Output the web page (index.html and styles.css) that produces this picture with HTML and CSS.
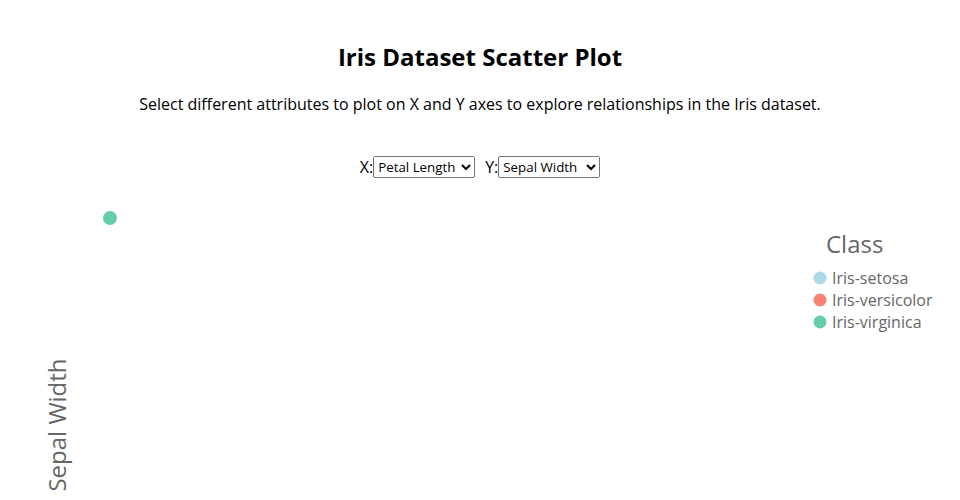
FILE: index.html
```html
<!DOCTYPE html>
<html>
<head>
<meta charset="utf-8">
<link rel="stylesheet" href="styles.css">
</head>
<body>
<h1 class="title">Iris Dataset Scatter Plot</h1>
<p class="subtitle">Select different attributes to plot on X and Y axes to explore relationships in the Iris dataset.</p>
<div class="controls">
  <label class="ctl">X:<select class="sel"><option>Sepal Length</option><option>Sepal Width</option><option selected>Petal Length</option><option>Petal Width</option></select></label>
  <label class="ctl">Y:<select class="sel"><option>Sepal Length</option><option selected>Sepal Width</option><option>Petal Length</option><option>Petal Width</option></select></label>
</div>
<svg class="chart" width="960" height="310" viewBox="0 190 960 310">
  <circle cx="110" cy="218" r="7" fill="#66cdaa"/>
  <text class="axis-label" transform="translate(66,425) rotate(-90)" text-anchor="middle">Sepal Width</text>
  <text class="legend-title" x="826" y="253">Class</text>
  <circle cx="820" cy="278" r="6.5" fill="#add8e6"/>
  <text class="legend-item" x="832" y="284">Iris-setosa</text>
  <circle cx="820" cy="300" r="6.5" fill="#fa8072"/>
  <text class="legend-item" x="832" y="306">Iris-versicolor</text>
  <circle cx="820" cy="322" r="6.5" fill="#66cdaa"/>
  <text class="legend-item" x="832" y="328">Iris-virginica</text>
</svg>
</body>
</html>
```
FILE: styles.css
```css
html, body {
  margin: 0;
  padding: 0;
  background: #fff;
}
body {
  font-family: "Open Sans", "DejaVu Sans", sans-serif;
  color: #000;
  text-align: center;
}
.title {
  margin: 42px 0 0;
  font-size: 24px;
  line-height: 30px;
  font-weight: 700;
}
.subtitle {
  margin: 20px 0 0;
  font-size: 16px;
  line-height: 24px;
}
.controls {
  margin-top: 40px;
  height: 22px;
  display: flex;
  justify-content: center;
  align-items: center;
  gap: 10px;
  font-size: 16px;
}
.ctl {
  display: flex;
  align-items: center;
}
.sel {
  font-family: "Open Sans", sans-serif;
  font-size: 13.3333px;
  height: 22px;
}
.chart {
  display: block;
  margin-top: 12px;
}
.axis-label {
  font-size: 24px;
  fill: #666;
}
.legend-title {
  font-size: 24px;
  fill: #666;
}
.legend-item {
  font-size: 16px;
  fill: #666;
}
```
